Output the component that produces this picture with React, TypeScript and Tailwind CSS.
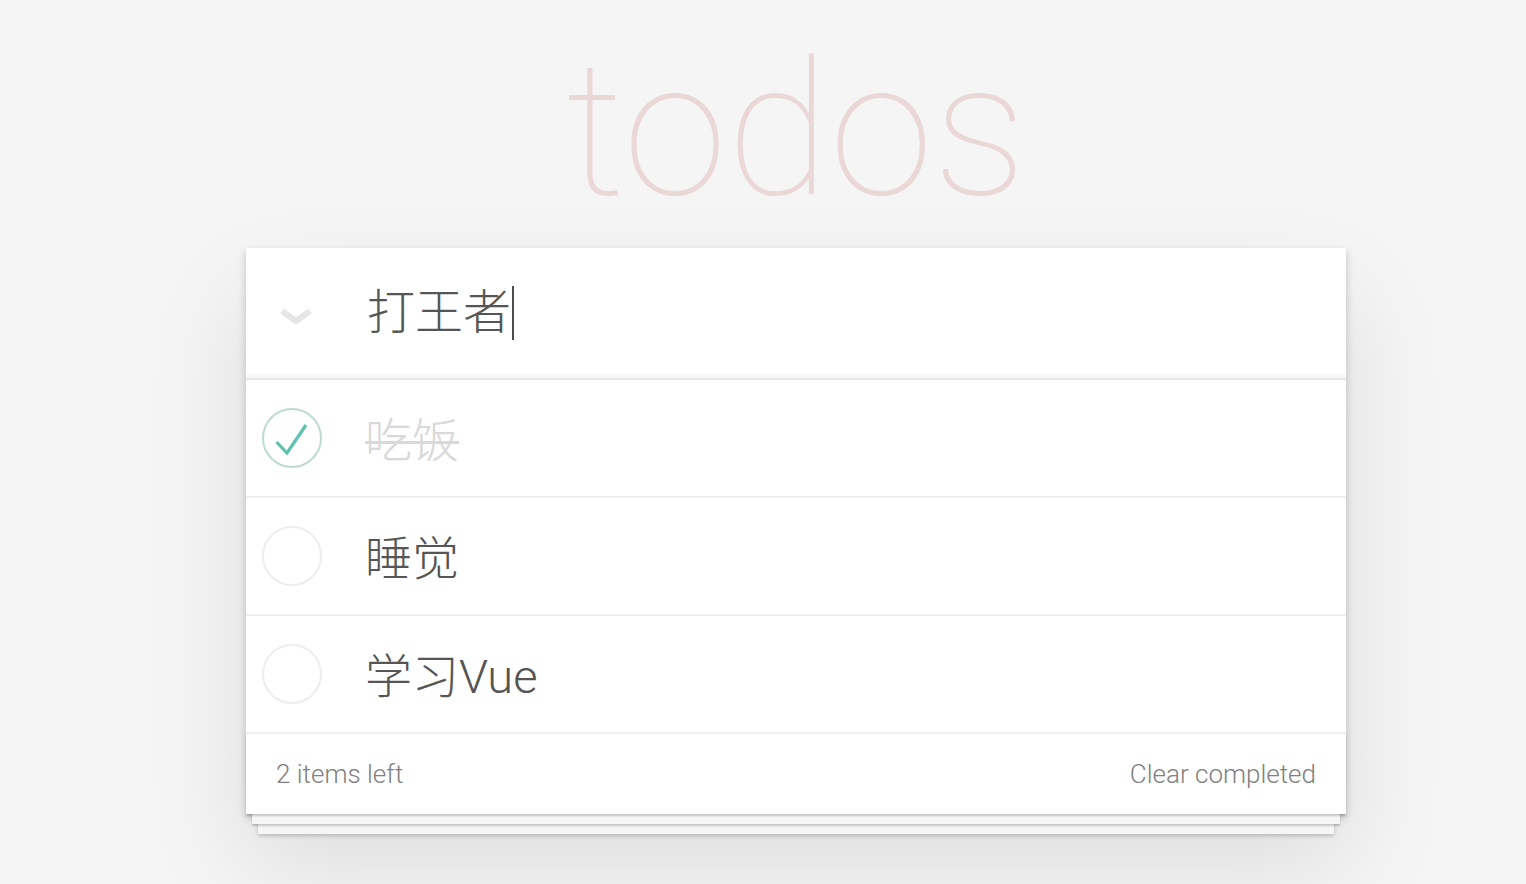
const todos = [
  { id: 1, title: "吃饭", done: true },
  { id: 2, title: "睡觉", done: false },
  { id: 3, title: "学习Vue", done: false },
];

const Toggle = ({ done }: { done: boolean }) => (
  <svg width="60" height="60" viewBox="0 0 60 60" className="shrink-0">
    <circle cx="30" cy="30" r="29" fill="none" stroke={done ? "#bddad5" : "#ededed"} strokeWidth="2" />
    {done && (
      <polyline points="14.5,34 25,45 44,17" fill="none" stroke="#5dc2af" strokeWidth="3.2" />
    )}
  </svg>
);

export default function App() {
  const left = todos.filter((t) => !t.done).length;

  return (
    <div className="min-h-[884px] bg-[#f5f5f5] font-['Roboto','Noto_Sans_CJK_SC',sans-serif] text-[#4d4d4d]">
      <div className="ml-[246px] w-[1100px] pt-[36px]">
        <h1 className="mb-[24px] h-[188px] text-center text-[188px] leading-none font-thin text-[rgba(175,47,47,0.15)]">
          todos
        </h1>

        <section className="bg-white shadow-[0_4px_8px_0_rgba(0,0,0,0.2),0_50px_100px_0_rgba(0,0,0,0.1)]">
          {/* new todo */}
          <header className="flex h-[130px] items-center shadow-[inset_0_-4px_2px_rgba(0,0,0,0.03)]">
            <div className="flex w-[121px] pl-[34px] pt-[10px]">
              <svg width="32" height="20" viewBox="0 0 32 20">
                <polyline points="2,3 16,13 30,3" fill="none" stroke="#e6e6e6" strokeWidth="6" />
              </svg>
            </div>
            <div className="flex items-center text-[48px] font-light leading-none text-[#555]">
              <span>打王者</span>
              <span className="ml-[1px] h-[54px] w-[2px] bg-[#4d4d4d]" />
            </div>
          </header>

          {/* list */}
          <ul className="border-t-2 border-[#e6e6e6]">
            {todos.map((todo) => (
              <li key={todo.id} className="flex h-[118px] items-center border-b-2 border-[#ededed] pl-[16px]">
                <Toggle done={todo.done} />
                <span
                  className={
                    todo.done
                      ? "ml-[43px] pt-[6px] text-[47px] font-light text-[#d9d9d9] line-through decoration-[3px]"
                      : "ml-[43px] pt-[6px] text-[47px] font-light text-[#555]"
                  }
                >
                  {todo.title}
                </span>
              </li>
            ))}
          </ul>

          {/* footer */}
          <footer className="flex h-[80px] items-center justify-between px-[30px] text-[26px] font-light text-[#808080] shadow-[0_2px_2px_rgba(0,0,0,0.2),0_16px_0_-6px_#f6f6f6,0_18px_2px_-6px_rgba(0,0,0,0.2),0_32px_0_-12px_#f6f6f6,0_34px_4px_-12px_rgba(0,0,0,0.2)]">
            <span>{left} items left</span>
            <span>Clear completed</span>
          </footer>
        </section>
      </div>
    </div>
  );
}
